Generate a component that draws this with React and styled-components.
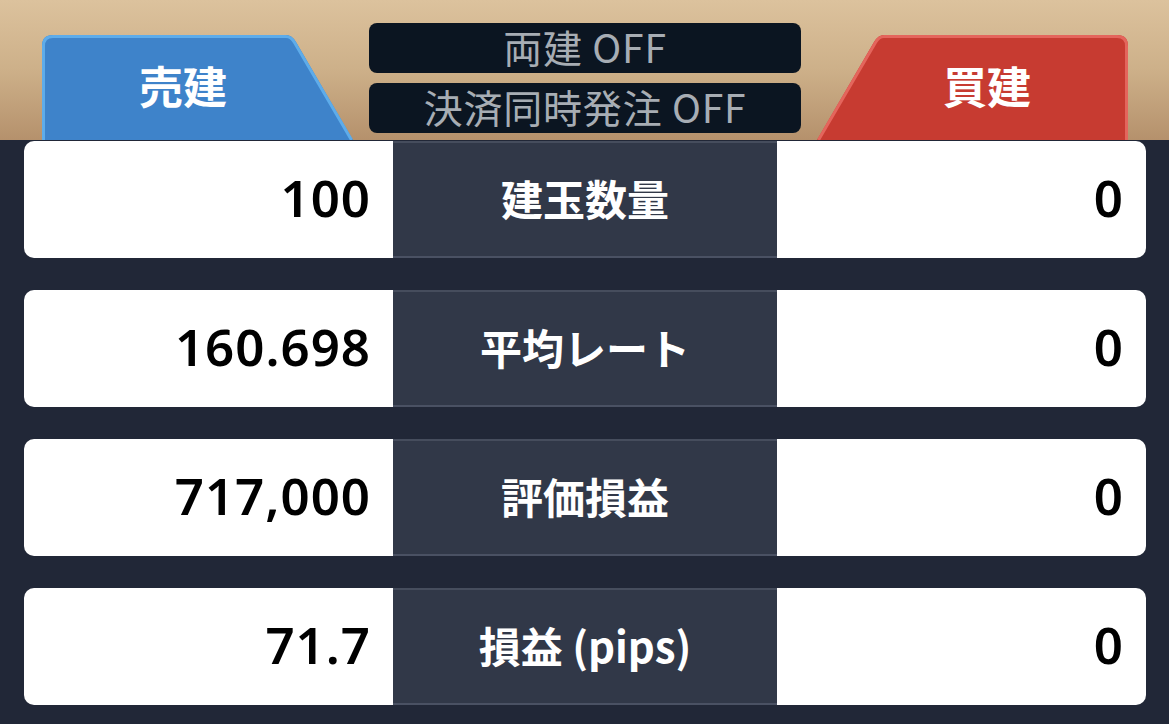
import React from "react";
import styled, { createGlobalStyle } from "styled-components";

const Global = createGlobalStyle`
  html, body { margin: 0; padding: 0; background: #212737; }
  body { width: 1169px; height: 724px; overflow: hidden; font-family: "Noto Sans", "Noto Sans CJK JP", sans-serif; }
`;

const Page = styled.div`
  width: 1169px;
  height: 724px;
  background: #212737;
  display: flex;
  flex-direction: column;
`;

const Header = styled.header`
  height: 140px;
  box-sizing: border-box;
  padding: 0 41px 0 42px;
  background: linear-gradient(180deg, #dcc29d 0%, #cdb089 50%, #b5916c 100%);
  display: flex;
  align-items: flex-end;
  gap: 16px;
`;

const Tab = styled.div`
  position: relative;
  width: 311px;
  height: 106px;
  flex: none;
  display: flex;
  align-items: center;
  justify-content: ${(p) => (p.$side === "left" ? "flex-start" : "flex-end")};
`;

const TabShape = styled.svg`
  position: absolute;
  inset: 0;
  width: 100%;
  height: 100%;
`;

const TabLabel = styled.span`
  position: relative;
  width: 282px;
  text-align: center;
  margin-top: -4px;
  font-family: "Noto Sans CJK JP", sans-serif;
  font-weight: 700;
  font-size: 44px;
  color: #ffffff;
`;

const ToggleStack = styled.div`
  width: 432px;
  flex: none;
  align-self: stretch;
  display: flex;
  flex-direction: column;
  gap: 10px;
  padding: 23px 0 7px;
  box-sizing: border-box;
`;

const Toggle = styled.div`
  height: 50px;
  border-radius: 8px;
  background: #0b1521;
  display: flex;
  align-items: center;
  justify-content: center;
  font-family: "Noto Sans CJK JP", sans-serif;
  font-weight: 400;
  font-size: 39px;
  color: #a7adb4;
  line-height: 1;
  letter-spacing: 0.8px;
  white-space: nowrap;
  padding-bottom: 3px;
  box-sizing: border-box;
`;

const Rows = styled.main`
  display: flex;
  flex-direction: column;
  gap: 32px;
  padding: 1px 23px 0 24px;
`;

const Row = styled.div`
  height: 117px;
  display: grid;
  grid-template-columns: 369px 384px 369px;
`;

const Value = styled.div`
  background: #ffffff;
  border-radius: ${(p) => (p.$side === "left" ? "10px 0 0 10px" : "0 10px 10px 0")};
  display: flex;
  align-items: center;
  justify-content: flex-end;
  padding: 0 22px 5px 0;
  font-family: "Noto Sans", sans-serif;
  font-weight: 600;
  font-size: 51px;
  color: #000000;
  letter-spacing: 1px;
`;

const Label = styled.div`
  background: #313848;
  border-top: 2px solid #464d5d;
  border-bottom: 2px solid #4a5163;
  box-sizing: border-box;
  display: flex;
  align-items: center;
  justify-content: center;
  padding-bottom: 5px;
  font-family: "Noto Sans CJK JP", sans-serif;
  font-weight: 700;
  font-size: 42px;
  color: #ffffff;
  white-space: nowrap;
`;

function SideTab({ side, label, fill, edge }) {
  const left = side === "left";
  const fillPath = left
    ? "M0,106 L0,12 Q0,1 11,1 L244,1 Q250,1 254,8 L311,106 Z"
    : "M311,106 L311,12 Q311,1 300,1 L67,1 Q61,1 57,8 L0,106 Z";
  const edgePath = left
    ? "M1.5,106 L1.5,12 Q1.5,2.5 11,2.5 L244,2.5 Q249,2.5 252.5,8.5 L309.5,106"
    : "M309.5,106 L309.5,12 Q309.5,2.5 300,2.5 L67,2.5 Q62,2.5 58.5,8.5 L1.5,106";
  return (
    <Tab $side={side}>
      <TabShape viewBox="0 0 311 106" preserveAspectRatio="none">
        <path d={fillPath} fill={fill} />
        <path d={edgePath} fill="none" stroke={edge} strokeWidth="3" />
      </TabShape>
      <TabLabel>{label}</TabLabel>
    </Tab>
  );
}

const data = [
  { left: "100", label: "建玉数量", right: "0" },
  { left: "160.698", label: "平均レート", right: "0" },
  { left: "717,000", label: "評価損益", right: "0" },
  { left: "71.7", label: "損益 (pips)", right: "0" },
];

export default function App() {
  return (
    <Page>
      <Global />
      <Header>
        <SideTab side="left" label="売建" fill="#3e83ca" edge="#5eacea" />
        <ToggleStack>
          <Toggle>両建 OFF</Toggle>
          <Toggle>決済同時発注 OFF</Toggle>
        </ToggleStack>
        <SideTab side="right" label="買建" fill="#c73b31" edge="#e4655c" />
      </Header>
      <Rows>
        {data.map((r) => (
          <Row key={r.label}>
            <Value $side="left">{r.left}</Value>
            <Label>{r.label}</Label>
            <Value $side="right">{r.right}</Value>
          </Row>
        ))}
      </Rows>
    </Page>
  );
}
